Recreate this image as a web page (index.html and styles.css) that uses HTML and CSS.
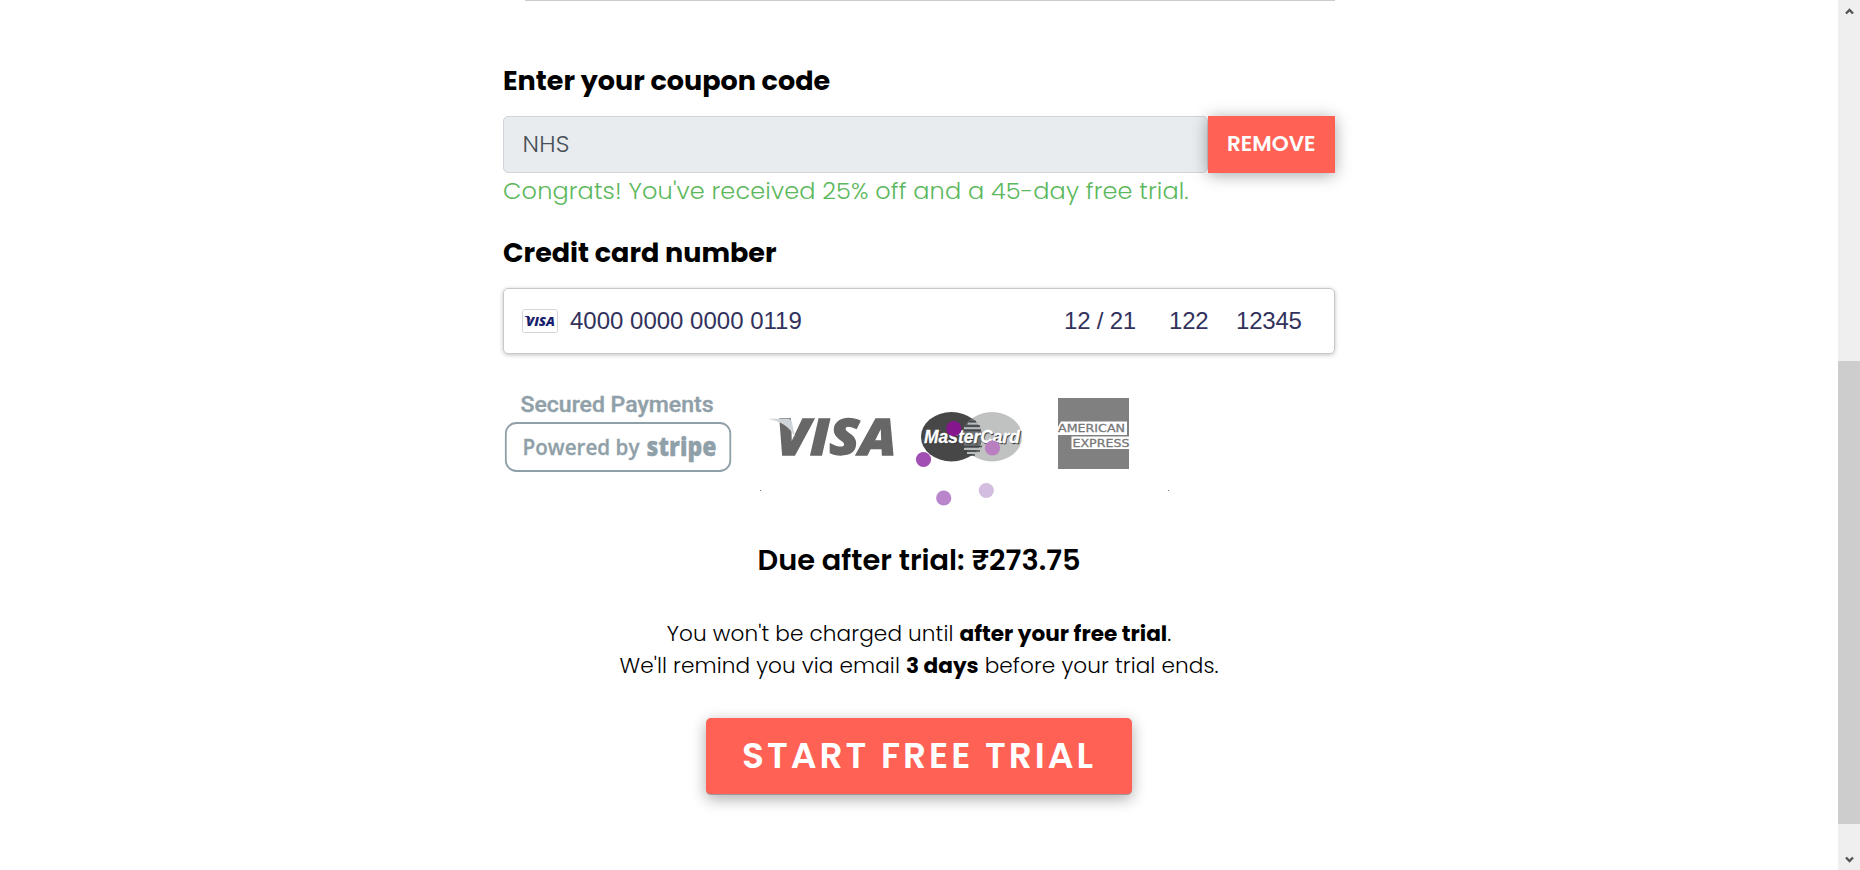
FILE: index.html
```html
<!DOCTYPE html>
<html lang="en">
<head>
<meta charset="utf-8">
<title>Start free trial</title>
<link rel="stylesheet" href="styles.css">
</head>
<body>
<div class="window">
  <main class="page">
    <form class="checkout">
      <div class="divider"></div>
      <h2 class="heading">Enter your coupon code</h2>
      <div class="coupon">
        <div class="coupon-input">NHS</div>
        <div class="coupon-remove">REMOVE</div>
      </div>
      <p class="success">Congrats! You've received 25% off and a 45-day free trial.</p>
      <h2 class="heading">Credit card number</h2>
      <div class="card-field">
        <svg class="card-brand" width="36" height="24" viewBox="0 0 36 24">
          <rect x=".5" y=".5" width="35" height="23" rx="2" fill="#fff" stroke="#d5d5d8"/>
          <text x="4" y="16.500" class="mini-visa" textLength="29" lengthAdjust="spacingAndGlyphs">VISA</text>
          <path d="M2 7h5l2 5Q6 8 2 7z" fill="#171e6c"/>
        </svg>
        <span class="card-number">4000 0000 0000 0119</span>
        <span class="card-expiry">12 / 21</span>
        <span class="card-cvc">122</span>
        <span class="card-zip">12345</span>
      </div>
      <div class="brands">
        <svg class="stripe" width="230" height="90" viewBox="503 390 230 90">
          <text x="520.500" y="411.500" class="secured" textLength="193" lengthAdjust="spacingAndGlyphs">Secured Payments</text>
          <rect x="505.800" y="423" width="224.500" height="48" rx="10.500" fill="none" stroke="#90a0a8" stroke-width="1.800"/>
          <text x="522.500" y="455" class="powered" textLength="117" lengthAdjust="spacingAndGlyphs">Powered by</text>
          <text x="646.500" y="456" class="stripe-word" textLength="70" lengthAdjust="spacingAndGlyphs">stripe</text>
        </svg>
        <svg class="cards" width="439" height="106" viewBox="733 390 439 106">
          <text x="776" y="455.300" class="visa" textLength="120.500" lengthAdjust="spacingAndGlyphs">VISA</text>
          <path d="M768.500 418.800h19q3.500 0 4.200 2.500L795 437Q787 422 768.500 419z" fill="#cfd4d8"/>
          <ellipse cx="992" cy="436.700" rx="30" ry="24.700" fill="#c0c2c2"/>
          <ellipse cx="951.500" cy="436.700" rx="30.500" ry="24.700" fill="#474747"/>
          <path d="M971.800 418.300A30.500 24.700 0 0 1 971.800 455.100A30 24.700 0 0 1 971.800 418.300z" fill="#6c6f72"/>
          <path d="M969 421.500h7M965 426h15M963 430.500h18M963 446.500h19M964 451h16M969 455h6" stroke="#42474b" stroke-width="1.600"/>
          <path d="M968 423.700h10M964 428.200h16M964 449h17M967 453h11" stroke="#b9bcbd" stroke-width="1.800"/>
          <text x="924.800" y="443.700" class="mastercard mastercard-shade" textLength="96" lengthAdjust="spacingAndGlyphs">MasterCard</text>
          <text x="924" y="443" class="mastercard" textLength="96" lengthAdjust="spacingAndGlyphs">MasterCard</text>
          <rect x="1058" y="398" width="71" height="71" fill="#808080"/>
          <path d="M1061 421.500h66v13.500h-69v-8zM1071.500 436.500H1129V449h-57.500z" fill="#fff"/>
          <text x="1058" y="432" class="amex" textLength="67" lengthAdjust="spacingAndGlyphs">AMERICAN</text>
          <text x="1072.500" y="446.500" class="amex" textLength="57" lengthAdjust="spacingAndGlyphs">EXPRESS</text>
          <path d="M760 490h1v1h-1zM1168 490h1v1h-1z" fill="#777"/>
        </svg>
        <svg class="spinner" width="92" height="94" viewBox="912 416 92 94">
          <circle cx="953.800" cy="428.700" r="7.600" fill="#85168c"/>
          <circle cx="923.500" cy="459.500" r="7.600" fill="#a14fb3"/>
          <circle cx="943.700" cy="498" r="7.600" fill="#b985cb"/>
          <circle cx="986.300" cy="490.500" r="7.600" fill="#d3bedf"/>
          <circle cx="992.500" cy="448" r="7.600" fill="#b97fc0"/>
        </svg>
      </div>
      <p class="due">Due after trial: ₹273.75</p>
      <p class="note">You won't be charged until <b>after your free trial</b>.<br>We'll remind you via email <b>3 days</b> before your trial ends.</p>
      <div class="start">START FREE TRIAL</div>
    </form>
  </main>
  <aside class="scrollbar">
    <svg width="9" height="7" viewBox="0 0 9 7"><path d="M1 5.500 4.500 2 8 5.500" fill="none" stroke="#555" stroke-width="2.400"/></svg>
    <div class="thumb"></div>
    <svg width="9" height="7" viewBox="0 0 9 7"><path d="M1 1.500 4.500 5 8 1.500" fill="none" stroke="#555" stroke-width="2.400"/></svg>
  </aside>
</div>
</body>
</html>
```
FILE: styles.css
```css
* { box-sizing: border-box; }
body { margin: 0; background: #fff; color: #000; font-family: Poppins, Inter, sans-serif; }
.window { display: flex; height: 870px; overflow: hidden; }
.page { flex: 1; display: flex; justify-content: center; }
.checkout { width: 832px; display: flex; flex-direction: column; }
.divider { height: 1px; margin: 0 0 60px 22px; background: #ccc; }
.heading { margin: 0 0 15px; font-size: 27px; line-height: 40px; font-weight: 700; white-space: nowrap; }
.coupon { display: flex; height: 57px; }
.coupon-input { flex: 1; padding-left: 18.500px; border: 1px solid #ced4da; border-radius: 5px; background: #e8ecef; color: #495057; font-size: 24px; font-weight: 300; line-height: 53px; letter-spacing: .2px; }
.coupon-remove { width: 127px; padding-left: 19px; background: #ff6155; color: #fff; font-size: 21.600px; font-weight: 600; line-height: 55px; box-shadow: 0 2px 15px rgba(0, 0, 0, .35); }
.success { margin: 0 0 24px; font-size: 24px; font-weight: 300; line-height: 36px; letter-spacing: .12px; color: #5cb85c; white-space: nowrap; }
.card-field { display: flex; align-items: center; height: 66px; padding-left: 18px; border: 1px solid #c8c8c8; border-radius: 5px; box-shadow: 0 1px 4px rgba(0, 0, 0, .25); color: #32325d; font: 24px "Liberation Sans", Arial, sans-serif; }
.card-number { margin-left: 12px; width: 494px; }
.card-expiry { width: 105px; letter-spacing: -.2px; }
.card-cvc { width: 67px; letter-spacing: -.2px; }
.card-zip { letter-spacing: -.2px; }
.mini-visa { font: italic 800 13px "Open Sans", sans-serif; fill: #171e6c; }
.brands { position: relative; display: flex; height: 106px; margin-top: 36px; }
.secured { font: 500 22px Roboto, sans-serif; fill: #90a0a8; stroke: #90a0a8; stroke-width: .4px; }
.powered { font: 600 22px "Open Sans", sans-serif; fill: #90a0a8; stroke: #90a0a8; stroke-width: .3px; }
.stripe-word { font: 800 26px "Open Sans", sans-serif; fill: #90a0a8; stroke: #90a0a8; stroke-width: .3px; }
.visa { font: italic 800 50px "Open Sans", sans-serif; fill: #676767; stroke: #676767; stroke-width: 1.300px; }
.mastercard { font: italic 700 18px "Liberation Sans", sans-serif; fill: #fff; stroke: #fff; stroke-width: .3px; }
.mastercard-shade { fill: #333; stroke: #333; }
.amex { font: 11px "DejaVu Sans", sans-serif; fill: #777; stroke: #777; stroke-width: .3px; }
.spinner { position: absolute; left: 409px; top: 26px; }
.due { margin: 43px 0 36px; font-size: 28.800px; font-weight: 600; line-height: 43px; height: 42px; text-align: center; }
.note { margin: 0 0 37px; padding-top: 1px; height: 64px; font-size: 21.600px; font-weight: 300; line-height: 32px; letter-spacing: .1px; text-align: center; }
.note b { font-weight: 700; letter-spacing: 0; }
.start { align-self: center; width: 426px; height: 77px; padding-left: 36px; border-bottom: 1px solid #9b9b9b; border-radius: 5px; background: #ff6155; color: #fff; font-size: 36px; font-weight: 600; line-height: 76px; letter-spacing: 3px; box-shadow: 0 4px 15px rgba(0, 0, 0, .33); white-space: nowrap; }
.scrollbar { display: flex; flex-direction: column; align-items: center; width: 22px; padding: 8px 0 7px; background: #efefef; }
.thumb { width: 22px; height: 463px; margin: 346px 0 auto; background: #cdcdcd; }
```
